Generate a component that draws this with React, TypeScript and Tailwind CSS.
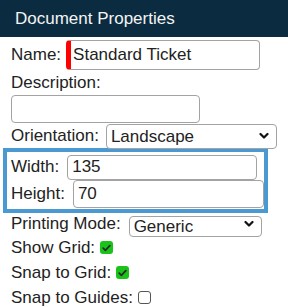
import React from "react";

function Chevron() {
  return (
    <svg
      className="pointer-events-none absolute right-[8px] top-1/2 -translate-y-1/2"
      width="10"
      height="7"
      viewBox="0 0 10 7"
    >
      <polyline points="1.5,1.5 5,5 8.5,1.5" fill="none" stroke="#111" strokeWidth="2.2" strokeLinecap="round" strokeLinejoin="round" />
    </svg>
  );
}

function Select({ value, options, className }: { value: string; options: string[]; className: string }) {
  return (
    <div className={`relative ${className}`}>
      <select
        defaultValue={value}
        className="h-full w-full appearance-none rounded-[4px] border border-[#a3a3a3] bg-white pl-[4px] text-[17px] leading-none text-[#222] outline-none"
      >
        {options.map((o) => (
          <option key={o}>{o}</option>
        ))}
      </select>
      <Chevron />
    </div>
  );
}

function Check({ checked }: { checked: boolean }) {
  if (!checked)
    return <span className="ml-[5px] inline-block h-[13px] w-[13px] rounded-[3px] border border-[#555] bg-white" />;
  return (
    <span className="ml-[5px] inline-flex h-[13px] w-[13px] items-center justify-center rounded-[3px] bg-[#19c319]">
      <svg width="9" height="8" viewBox="0 0 9 8">
        <polyline points="1.2,4.2 3.4,6.3 7.8,1.6" fill="none" stroke="#2a2a2a" strokeWidth="1.8" strokeLinecap="round" strokeLinejoin="round" />
      </svg>
    </span>
  );
}

export default function App() {
  return (
    <div className="h-[307px] w-[288px] overflow-hidden bg-white font-['Liberation_Sans',Arial,sans-serif] text-[17px] text-[#222]">
      {/* Header */}
      <div className="flex h-[37px] items-center bg-[#0b2b40] pl-[15px] text-[17px] text-[#f4f4f4]">
        Document Properties
      </div>

      <div className="pl-[11px]">
        {/* Name */}
        <div className="mt-[3px] flex h-[30px] items-center">
          <span>Name:</span>
          <input
            defaultValue="Standard Ticket"
            className="ml-[5px] h-[30px] w-[194px] rounded-[4px] border border-l-[5px] border-[#a3a3a3] border-l-[#ff0000] bg-white pl-[2px] text-[17px] text-[#222] outline-none"
          />
        </div>

        {/* Description */}
        <div className="flex h-[25px] items-center">Description:</div>
        <input className="block h-[28px] w-[189px] rounded-[4px] border border-[#a3a3a3] bg-white outline-none" />

        {/* Orientation */}
        <div className="mt-[1px] flex h-[24px] items-center">
          <span>Orientation:</span>
          <Select value="Landscape" options={["Landscape", "Portrait"]} className="ml-[7px] h-[25px] w-[171px]" />
        </div>
      </div>

      {/* Highlighted size box */}
      <div className="ml-[3px] h-[65px] w-[265px] border-[4px] border-[#4a9ad1] pl-[4px] pt-[2px]">
        <div className="flex h-[26px] items-center">
          <span>Width:</span>
          <input
            defaultValue="135"
            className="ml-[8px] h-[25px] w-[190px] rounded-[4px] border border-[#a3a3a3] bg-white pl-[4px] text-[17px] text-[#222] outline-none"
          />
        </div>
        <div className="flex h-[28px] items-center">
          <span>Height:</span>
          <input
            defaultValue="70"
            className="ml-[8px] h-[28px] w-[191px] rounded-[4px] border border-[#a3a3a3] bg-white pl-[4px] text-[17px] text-[#222] outline-none"
          />
        </div>
      </div>

      <div className="pl-[11px]">
        {/* Printing mode */}
        <div className="flex h-[22px] items-center">
          <span>Printing Mode:</span>
          <Select value="Generic" options={["Generic", "Zebra", "Dymo"]} className="ml-[8px] h-[21px] w-[133px]" />
        </div>

        {/* Toggles */}
        <div className="flex h-[25px] items-center">
          <span>Show Grid:</span>
          <Check checked />
        </div>
        <div className="flex h-[25px] items-center">
          <span>Snap to Grid:</span>
          <Check checked />
        </div>
        <div className="flex h-[25px] items-center">
          <span>Snap to Guides:</span>
          <Check checked={false} />
        </div>
      </div>
    </div>
  );
}
